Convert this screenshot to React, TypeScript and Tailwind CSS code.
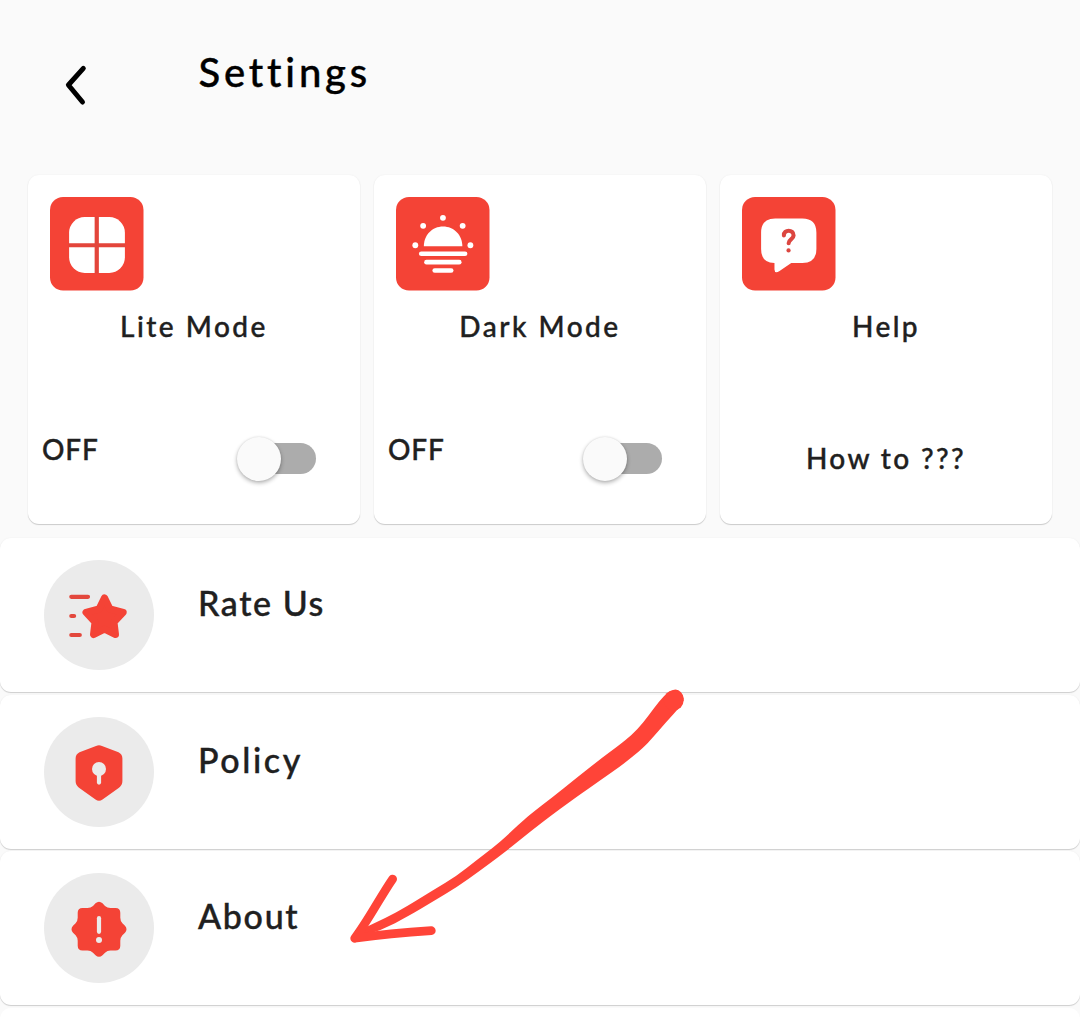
import React from "react";

function LiteIcon() {
  return (
    <svg className="block h-[93.5px] w-[93.5px]" viewBox="0 0 93 93">
      <rect width="93" height="93" rx="13" fill="#f44336" />
      <rect x="19" y="20" width="55.5" height="55.5" rx="15.5" fill="#fff" />
      <path d="M46.5 19.5V76M18.5 48H75" stroke="#e3453b" strokeWidth="4.2" />
    </svg>
  );
}

function SunIcon() {
  return (
    <svg className="block h-[93.5px] w-[93.5px]" viewBox="0 0 93 93">
      <rect width="93" height="93" rx="13" fill="#f44336" />
      <g fill="#fff">
        <circle cx="46.7" cy="20.7" r="2.9" />
        <circle cx="27" cy="28.7" r="2.9" />
        <circle cx="66.3" cy="28.7" r="2.9" />
        <circle cx="19.2" cy="48" r="2.9" />
        <circle cx="74" cy="48" r="2.9" />
        <path d="M27.7 49C27.7 38 36 29.4 46.8 29.4S66 38 66 49Z" />
        <rect x="22.8" y="54.1" width="48.2" height="4.6" rx="2.3" />
        <rect x="28" y="62.5" width="37.2" height="4.6" rx="2.3" />
        <rect x="36.2" y="70.8" width="21" height="4.6" rx="2.3" />
      </g>
    </svg>
  );
}

function HelpIcon() {
  return (
    <svg className="block h-[93.5px] w-[93.5px]" viewBox="0 0 93 93">
      <rect width="93" height="93" rx="13" fill="#f44336" />
      <path
        d="M33 21.4H60Q74 21.4 74 35.4V51.6Q74 65.6 60 65.6H49L37 73.8Q32.5 76.5 32.3 72V65.6Q19 65.4 19 51.6V35.4Q19 21.4 33 21.4Z"
        fill="#fff"
      />
      <path
        d="M41.7 38.2C41.4 32 51.4 32 51.3 38.2C51.2 42.3 46.4 42.2 46.4 46"
        fill="none"
        stroke="#dc4640"
        strokeWidth="4.1"
        strokeLinecap="round"
      />
      <circle cx="46.3" cy="53.2" r="2.1" fill="#dc4640" />
    </svg>
  );
}

function RateIcon() {
  return (
    <svg className="block h-[110px] w-[110px]" viewBox="0 0 110 110">
      <path
        d="M27.3 36.8H44M27.3 56H30.1M27.3 75H35.8"
        stroke="#e3483d"
        strokeWidth="4.2"
        strokeLinecap="round"
      />
      <path
        d="M60.5 37.8L66 49L79.2 52.4L70 62.2L71.5 74.5L60.5 69.2L49.5 74.5L51 62.2L42 52.4L55 49Z"
        fill="#f44336"
        stroke="#f44336"
        strokeWidth="7"
        strokeLinejoin="round"
      />
    </svg>
  );
}

function PolicyIcon() {
  return (
    <svg className="block h-[110px] w-[110px]" viewBox="0 0 110 110">
      <path
        d="M52 29Q55 27.6 58 29L74.5 35.3Q78.4 37.3 78.4 41.5V64Q78.4 68 75 70.8L58.5 82.6Q55 85 51.5 82.6L35 70.8Q31.6 68 31.6 64V41.5Q31.6 37.3 35.5 35.3Z"
        fill="#f44336"
      />
      <circle cx="55" cy="52" r="7" fill="#ebebeb" />
      <path d="M55 55V65.6" stroke="#ebebeb" strokeWidth="4.2" strokeLinecap="round" />
    </svg>
  );
}

function AboutIcon() {
  return (
    <svg className="block h-[110px] w-[110px]" viewBox="0 0 110 110">
      <path
        transform="translate(55 56.3)"
        d="M-3.5 -26Q0 -29 3.5 -26L6 -23.4Q8.3 -21.3 11.5 -21.3H16.5Q21.3 -21.3 21.3 -16.5V-11.5Q21.3 -8.3 23.4 -6L26 -3.5Q29 0 26 3.5L23.4 6Q21.3 8.3 21.3 11.5V16.5Q21.3 21.3 16.5 21.3H11.5Q8.3 21.3 6 23.4L3.5 26Q0 29 -3.5 26L-6 23.4Q-8.3 21.3 -11.5 21.3H-16.5Q-21.3 21.3 -21.3 16.5V11.5Q-21.3 8.3 -23.4 6L-26 3.5Q-29 0 -26 -3.5L-23.4 -6Q-21.3 -8.3 -21.3 -11.5V-16.5Q-21.3 -21.3 -16.5 -21.3H-11.5Q-8.3 -21.3 -6 -23.4Z"
        fill="#f44336"
      />
      <path d="M55 45.2V58.8" stroke="#ebebeb" strokeWidth="4.2" strokeLinecap="round" />
      <circle cx="55" cy="67" r="3" fill="#ebebeb" />
    </svg>
  );
}

const shaft: [number, number][] = [
  [1002, 46], [972, 84], [938, 130], [905, 165], [868, 195], [805, 242], [738, 295], [668, 351],
  [600, 404], [565, 434], [530, 468], [490, 502], [440, 540], [380, 588], [310, 630], [230, 680],
  [165, 715], [100, 744], [60, 778], [150, 753], [240, 706], [310, 664], [380, 622], [450, 572],
  [520, 520], [565, 484], [640, 424], [740, 350], [810, 302], [885, 249], [940, 203], [968, 173],
  [1008, 127], [1052, 79], [1066, 52], [1040, 22],
];

/* Closed curve through the midpoints of consecutive outline points. */
function smoothOutline(points: [number, number][]) {
  const mid = (i: number) => {
    const a = points[i % points.length];
    const b = points[(i + 1) % points.length];
    return `${(a[0] + b[0]) / 2} ${(a[1] + b[1]) / 2}`;
  };
  return (
    `M${mid(points.length - 1)}` + points.map((p, i) => `Q${p[0]} ${p[1]} ${mid(i)}`).join("") + "Z"
  );
}

function Card({ icon, title, titleClass, children }: {
  icon: React.ReactNode;
  title: string;
  titleClass: string;
  children: React.ReactNode;
}) {
  return (
    <section className="flex h-[349px] w-[332px] flex-col rounded-[11px] bg-white shadow-[0_1px_1px_rgba(0,0,0,0.18),0_0_2px_rgba(0,0,0,0.06)]">
      <div className="h-[115px] pt-[22px] pl-[22px]">{icon}</div>
      <h2 className={`mt-[22px] text-center text-[28px] leading-none font-medium whitespace-nowrap ${titleClass}`}>
        {title}
      </h2>
      {children}
    </section>
  );
}

function ToggleRow() {
  return (
    <div className="mt-[93px] flex items-start justify-between pr-[44px] pl-[14px]">
      <span className="mt-[2px] text-[28px] leading-none tracking-[0.9px]">OFF</span>
      <div className="mt-[10px] flex h-[31px] w-[72px] items-center rounded-full bg-[#acacac]">
        <div className="-ml-[7.5px] h-[44px] w-[44px] shrink-0 rounded-full bg-[#fafafa] shadow-[0_2px_4px_rgba(0,0,0,0.3),0_0_2px_rgba(0,0,0,0.1)]" />
      </div>
    </div>
  );
}

function Row({ icon, label, labelClass }: { icon: React.ReactNode; label: string; labelClass: string }) {
  return (
    <li className="flex h-[154px] shrink-0 items-start rounded-[11px] bg-white pt-[22px] pl-[44px] shadow-[0_1px_1px_rgba(0,0,0,0.17),0_0_2px_rgba(0,0,0,0.05)]">
      <div className="h-[110px] w-[110px] rounded-full bg-[#ebebeb]">{icon}</div>
      <span className={`mt-[26px] text-[34px] leading-none whitespace-nowrap ${labelClass}`}>{label}</span>
    </li>
  );
}

export default function App() {
  return (
    <main className="relative flex h-[1021px] w-[1080px] flex-col overflow-hidden bg-[#fafafa] font-['Lato',sans-serif] font-medium text-[#202020] [-webkit-text-stroke:0.4px_currentColor]">
      <header className="flex h-[175px] shrink-0 items-start pl-[60px] text-black">
        <svg className="mt-[60px] block h-[50px] w-[32px]" viewBox="0 0 32 50">
          <path
            d="M23.3 8.4L8.4 25L22.5 42"
            fill="none"
            stroke="currentColor"
            strokeWidth="5"
            strokeLinecap="round"
            strokeLinejoin="round"
          />
        </svg>
        <h1 className="mt-[52px] ml-[106.5px] text-[40px] leading-none font-medium tracking-[3.8px]">Settings</h1>
      </header>
      <div className="flex shrink-0 gap-[14px] pl-[28px]">
        <Card icon={<LiteIcon />} title="Lite Mode" titleClass="tracking-[2.5px]">
          <ToggleRow />
        </Card>
        <Card icon={<SunIcon />} title="Dark Mode" titleClass="tracking-[2.5px]">
          <ToggleRow />
        </Card>
        <Card icon={<HelpIcon />} title="Help" titleClass="tracking-[2.4px]">
          <p className="mt-[104px] text-center text-[28px] leading-none tracking-[2.4px]">How to ???</p>
        </Card>
      </div>
      <ul className="mt-[14px] flex flex-col gap-[2.5px]">
        <Row icon={<RateIcon />} label="Rate Us" labelClass="ml-[44px] tracking-[1.6px]" />
        <Row icon={<PolicyIcon />} label="Policy" labelClass="ml-[44px] tracking-[2.6px]" />
        <Row icon={<AboutIcon />} label="About" labelClass="ml-[44px] tracking-[1.7px]" />
        <li className="h-[154px] shrink-0 rounded-[11px] bg-white" />
      </ul>
      <svg
        className="pointer-events-none absolute top-[680px] left-[330px] h-[280px] w-[370px]"
        viewBox="0 0 1110 840"
      >
        <path d={smoothOutline(shaft)} fill="#ff4438" />
        <circle cx="1031" cy="61" r="30" fill="#ff4438" />
        <path
          d="M188 597C150 652 115 721 74 775M304 752C225 757 150 764 74 775"
          fill="none"
          stroke="#ff4438"
          strokeWidth="26"
          strokeLinecap="round"
          strokeLinejoin="round"
        />
      </svg>
    </main>
  );
}
